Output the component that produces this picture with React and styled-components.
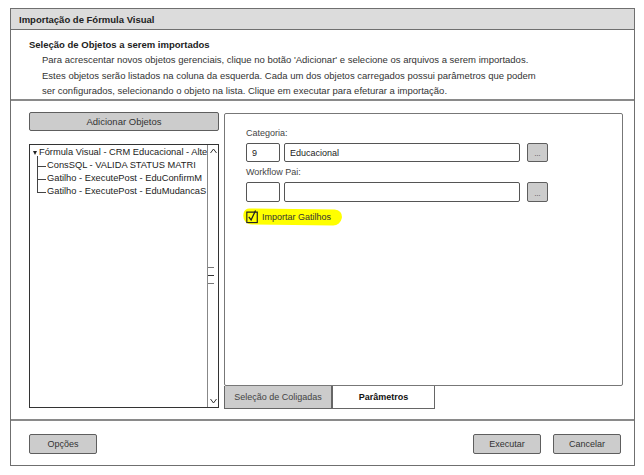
import React from "react";
import styled, { createGlobalStyle } from "styled-components";

const GlobalStyle = createGlobalStyle`
    body {
        margin: 0;
        background: #ffffff;
        font-family: "Liberation Sans", Arial, sans-serif;
        color: #222;
    }
`;

// Window frame
const Window = styled.div`
    margin: 8px 0 0 10px;
    width: 625px;
    height: 458px;
    box-sizing: border-box;
    border: 1px solid #6f6f6f;
    display: flex;
    flex-direction: column;
`;

const TitleBar = styled.div`
    height: 21px;
    flex-shrink: 0;
    box-sizing: border-box;
    background: #dcdcdc;
    border-bottom: 1px solid #6f6f6f;
    padding-left: 8px;
    display: flex;
    align-items: center;
    font-size: 9.5px;
    font-weight: bold;
`;

const Header = styled.div`
    height: 71px;
    flex-shrink: 0;
    box-sizing: border-box;
    border-bottom: 2px solid #8a8a8a;
    padding: 8px 0 0 18px;
`;

const HeaderTitle = styled.div`
    font-size: 9.5px;
    font-weight: bold;
    line-height: 14px;
`;

const HeaderText = styled.div`
    padding-left: 13px;
    font-size: 9.5px;
    line-height: 15.5px;
    color: #333;
`;

const Body = styled.div`
    height: 320px;
    flex-shrink: 0;
    box-sizing: border-box;
    border-bottom: 2px solid #8a8a8a;
    padding: 11px 0 0 18px;
    display: flex;
    gap: 5px;
`;

const LeftCol = styled.div`
    width: 190px;
    display: flex;
    flex-direction: column;
    gap: 13px;
`;

const Button = styled.div`
    height: ${(p) => p.h || 19}px;
    width: ${(p) => (p.w ? p.w + "px" : "auto")};
    box-sizing: border-box;
    background: #cccccc;
    border: 1px solid #5e5e5e;
    border-radius: 2px;
    display: flex;
    align-items: center;
    justify-content: center;
    font-size: ${(p) => p.fs || 9}px;
    color: #333;
`;

const TreeBox = styled.div`
    height: 264px;
    box-sizing: border-box;
    border: 1.5px solid #333;
    display: flex;
`;

const TreeList = styled.div`
    flex: 1;
    overflow: hidden;
    padding: 1px 0 0 3px;
    font-size: 9.3px;
    white-space: nowrap;
`;

const TreeRoot = styled.div`
    height: 13px;
    line-height: 13px;
    display: flex;
    align-items: center;
    gap: 2px;
`;

const Caret = styled.span`
    width: 0;
    height: 0;
    border-left: 2.5px solid transparent;
    border-right: 2.5px solid transparent;
    border-top: 4px solid #222;
    flex-shrink: 0;
`;

const TreeChild = styled.div`
    position: relative;
    height: 13px;
    line-height: 13px;
    padding-left: 14px;

    &::before {
        content: "";
        position: absolute;
        left: 4px;
        top: -3px;
        height: ${(p) => (p.last ? "9.5px" : "16px")};
        border-left: 1px solid #444;
    }
    &::after {
        content: "";
        position: absolute;
        left: 4px;
        top: 6.5px;
        width: 9px;
        border-top: 1px solid #444;
    }
`;

const ScrollBar = styled.div`
    width: 10px;
    border-left: 1.5px solid #888;
    display: flex;
    flex-direction: column;
    justify-content: space-between;
    align-items: center;
    position: relative;
`;

const Arrow = styled.svg`
    width: 7px;
    height: 6px;
    margin: 3px 0;
`;

const Grip = styled.div`
    position: absolute;
    left: 0;
    top: 122px;
    width: 6px;
    display: flex;
    flex-direction: column;
    gap: 7px;

    span {
        height: 1px;
        background: #777;
    }
    span:nth-child(2) {
        background: #333;
    }
`;

const RightCol = styled.div`
    width: 399px;
    display: flex;
    flex-direction: column;
    padding-top: 1px;
`;

const Panel = styled.div`
    height: 273px;
    box-sizing: border-box;
    border: 1.5px solid #777;
    border-radius: 2px;
    padding: 13px 0 0 21px;
`;

const Label = styled.div`
    font-size: 9px;
    line-height: 13px;
    color: #444;
    margin-bottom: 3px;
`;

const FieldRow = styled.div`
    display: flex;
    align-items: center;
    height: ${(p) => p.h}px;
    margin-bottom: 4px;
`;

const Input = styled.div`
    width: ${(p) => p.w}px;
    height: 100%;
    box-sizing: border-box;
    border: 1px solid #555;
    border-radius: 2px;
    margin-right: ${(p) => p.mr || 0}px;
    padding-left: 5px;
    display: flex;
    align-items: center;
    font-size: 9px;
    color: #222;
    background: #fff;
`;

const DotsButton = styled(Button)`
    width: 21px;
    height: 100%;
    font-size: 7px;
    align-items: flex-end;
    padding-bottom: 4px;
`;

const CheckRow = styled.div`
    margin-top: 7px;
    margin-left: -3px;
    display: flex;
    align-items: center;
    gap: 3px;
    height: 16px;
    width: 96px;
    padding-left: 3px;
    background: #ffff00;
    border-radius: 6px 10px 9px 12px;
    transform: skewX(-8deg) rotate(0.8deg);
    font-size: 9px;
    color: #333;

    & > * {
        transform: skewX(8deg) rotate(-0.8deg);
    }
`;

const TabBar = styled.div`
    display: flex;
    height: 23px;
`;

const Tab = styled.div`
    width: ${(p) => p.w}px;
    box-sizing: border-box;
    border: 1px solid #666;
    border-top: none;
    background: ${(p) => (p.active ? "#ffffff" : "#cccccc")};
    color: ${(p) => (p.active ? "#111" : "#444")};
    font-weight: ${(p) => (p.active ? "bold" : "normal")};
    font-size: 9px;
    display: flex;
    align-items: center;
    justify-content: center;
`;

const Footer = styled.div`
    flex: 1;
    display: flex;
    align-items: flex-start;
    padding: 13px 13px 0 18px;
`;

const Spacer = styled.div`
    flex: 1;
`;

const FooterButtons = styled.div`
    display: flex;
    gap: 12px;
`;

const CheckBox = () => (
    <svg width="13" height="14" viewBox="0 0 13 14">
        <rect x="0.7" y="2.7" width="10.5" height="10.5" fill="none" stroke="#222" strokeWidth="1.2" />
        <path d="M2.7 7.5 L5 10.5 L9.5 1" fill="none" stroke="#222" strokeWidth="1.3" />
    </svg>
);

export default function App() {
    const lines = [
        "Para acrescentar novos objetos gerenciais, clique no botão 'Adicionar' e selecione os arquivos a serem importados.",
        "Estes objetos serão listados na coluna da esquerda. Cada um dos objetos carregados possui parâmetros que podem",
        "ser configurados, selecionando o objeto na lista. Clique em executar para efeturar a importação.",
    ];
    // the list is narrower than the names, so only the visible part is shown
    const children = [
        "ConsSQL - VALIDA STATUS MATRI",
        "Gatilho - ExecutePost - EduConfirmM",
        "Gatilho - ExecutePost - EduMudancaS",
    ];

    return (
        <>
            <GlobalStyle />
            <Window>
                <TitleBar>Importação de Fórmula Visual</TitleBar>
                <Header>
                    <HeaderTitle>Seleção de Objetos a serem importados</HeaderTitle>
                    <HeaderText>
                        {lines.map((l) => (
                            <div key={l}>{l}</div>
                        ))}
                    </HeaderText>
                </Header>
                <Body>
                    <LeftCol>
                        <Button fs={9.5}>Adicionar Objetos</Button>
                        <TreeBox>
                            <TreeList>
                                <TreeRoot>
                                    <Caret />
                                    Fórmula Visual - CRM Educacional - Alte
                                </TreeRoot>
                                {children.map((c, i) => (
                                    <TreeChild key={c} last={i === children.length - 1}>
                                        {c}
                                    </TreeChild>
                                ))}
                            </TreeList>
                            <ScrollBar>
                                <Arrow viewBox="0 0 7 6">
                                    <path d="M0.5 5 L3.5 1 L6.5 5" fill="none" stroke="#333" strokeWidth="1" />
                                </Arrow>
                                <Grip>
                                    <span />
                                    <span />
                                    <span />
                                </Grip>
                                <Arrow viewBox="0 0 7 6">
                                    <path d="M0.5 1 L3.5 5 L6.5 1" fill="none" stroke="#333" strokeWidth="1" />
                                </Arrow>
                            </ScrollBar>
                        </TreeBox>
                    </LeftCol>
                    <RightCol>
                        <Panel>
                            <Label>Categoria:</Label>
                            <FieldRow h={19}>
                                <Input w={34} mr={4}>9</Input>
                                <Input w={236} mr={7}>Educacional</Input>
                                <DotsButton>...</DotsButton>
                            </FieldRow>
                            <Label>Workflow Pai:</Label>
                            <FieldRow h={20}>
                                <Input w={34} mr={4} />
                                <Input w={236} mr={7} />
                                <DotsButton>...</DotsButton>
                            </FieldRow>
                            <CheckRow>
                                <CheckBox />
                                <span>Importar Gatilhos</span>
                            </CheckRow>
                        </Panel>
                        <TabBar>
                            <Tab w={108}>Seleção de Coligadas</Tab>
                            <Tab w={103} active>
                                Parâmetros
                            </Tab>
                        </TabBar>
                    </RightCol>
                </Body>
                <Footer>
                    <Button w={68} h={20}>
                        Opções
                    </Button>
                    <Spacer />
                    <FooterButtons>
                        <Button w={68} h={20}>
                            Executar
                        </Button>
                        <Button w={68} h={20}>
                            Cancelar
                        </Button>
                    </FooterButtons>
                </Footer>
            </Window>
        </>
    );
}
